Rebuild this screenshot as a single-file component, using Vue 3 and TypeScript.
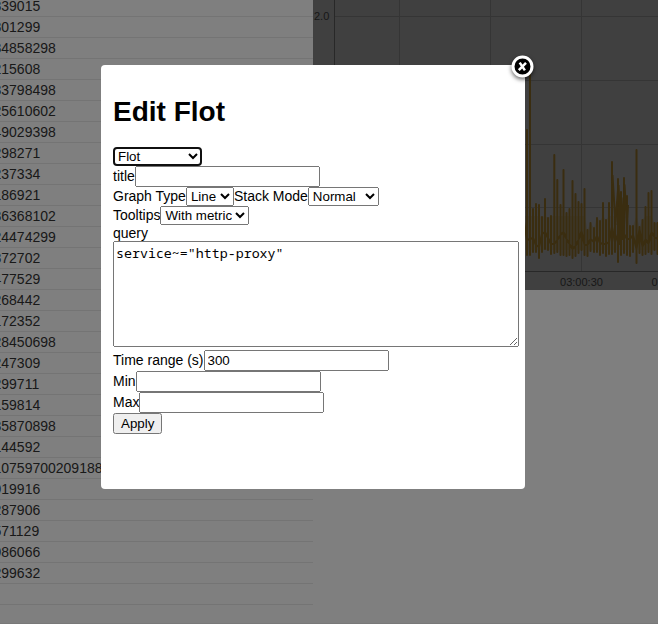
<script setup lang="ts">
import { onMounted, ref } from 'vue'

const rows: string[] = [
  '839015', '801299', '34858298', '215608', '33798498', '25610602', '49029398',
  '298271', '237334', '186921', '36368102', '24474299', '872702', '477529',
  '268442', '172352', '28450698', '247309', '299711', '159814', '35870898',
  '144592', '10759700209188', '919916', '287906', '571129', '986066', '299632', '', '',
]

const type = ref('Flot')
const title = ref('')
const graphType = ref('Line')
const stackMode = ref('Normal')
const tooltips = ref('With metric')
const query = ref('service~="http-proxy"')
const timeRange = ref('300')
const min = ref('')
const max = ref('')

const typeSelect = ref<HTMLSelectElement | null>(null)
onMounted(() => typeSelect.value?.focus())

// Each sample is [x, peak, middle, trough] in page pixels.
const samples: [number, number, number, number][] = [
  [524, 212, 222, 226], [527, 130, 240, 255], [530, 70, 239, 255], [533, 209, 238, 252],
  [536, 204, 245, 252], [539, 205, 247, 258], [542, 217, 234, 252], [545, 199, 232, 249],
  [548, 218, 238, 250], [551, 216, 244, 254], [554.3, 155, 244, 253], [557.3, 180, 240, 252],
  [560.5, 205, 235, 255], [563.5, 170, 232, 255], [566.5, 213, 239, 256], [569.5, 209, 244, 255],
  [572.5, 181, 249, 258], [575.5, 194, 246, 256], [578.5, 202, 240, 253], [581.5, 204, 231, 250],
  [584.5, 189, 245, 255], [587.5, 230, 245, 256], [590.5, 223, 239, 251], [594, 228, 242, 252],
  [597, 218, 236, 252], [600, 221, 243, 255], [603, 203, 244, 253], [606, 220, 244, 256],
  [609, 203, 242, 254], [612, 162, 227, 254], [615, 212, 242, 252], [618, 179, 234, 262],
  [621, 192, 235, 255], [624, 178, 234, 253], [627, 196, 239, 255], [630, 226, 239, 256],
  [633, 226, 235, 252], [636.5, 150, 249, 263], [639.5, 227, 229, 253], [642.5, 220, 247, 255],
  [645.5, 207, 239, 254], [648.5, 193, 244, 252], [651.5, 191, 232, 254], [654.5, 223, 237, 250],
  [657.5, 223, 239, 254],
]

const line: string = samples
  .map(([x, top, mid, bottom], i) => `${i === 0 ? 'M' : 'L'}${x - 313} ${mid}V${top}V${bottom}V${mid}`)
  .join('')
// Ramps that run slantwise between neighbouring samples.
const ramps = 'M299.5 175L302.5 225M302.5 222L305 190M305.5 185L307.5 230L308.5 198L310.5 228L311.5 185L314 225L315 205M306.5 200V245M309.5 205V240'
const area: string = `M211 230${samples
  .map(([x, top]) => `L${x - 313} ${Math.max(top, 216)}`)
  .join('')}L345 250L211 250Z`
</script>

<template>
  <div class="dashboard">
    <div class="values">
      <div v-for="(value, i) in rows" :key="i" class="value">{{ value }}</div>
    </div>
    <svg class="graph" width="345" height="290" viewBox="0 0 345 290">
      <rect width="345" height="290" fill="#808080" />
      <path class="grid" d="M21 16.5H345M21 80.5H345M21 144.5H345M21 207.5H345M86.5 0V271M177.5 0V271M268.5 0V271" />
      <path class="axis" d="M21.5 0V271M21 271.5H345" />
      <path :d="area" class="area" />
      <path :d="line" class="line" />
      <path :d="ramps" class="line" />
      <text x="1" y="20">2.0</text>
      <text x="268.5" y="286" text-anchor="middle">03:00:30</text>
      <text x="360" y="286" text-anchor="middle">03:01:00</text>
    </svg>
  </div>
  <div class="overlay">
    <form class="modal" @submit.prevent>
      <h1>Edit Flot</h1>
      <div><select ref="typeSelect" v-model="type" class="type"><option>Flot</option></select></div>
      <div><label>title</label><input v-model="title" type="text"></div>
      <div>
        <label>Graph Type</label><select v-model="graphType" class="graph-type"><option>Line</option></select><label>Stack Mode</label><select v-model="stackMode" class="stack"><option>Normal</option></select>
      </div>
      <div><label>Tooltips</label><select v-model="tooltips" class="tips"><option>With metric</option></select></div>
      <div><label>query</label></div>
      <div class="query"><textarea v-model="query" spellcheck="false"></textarea></div>
      <div><label>Time range (s)</label><input v-model="timeRange" type="text"></div>
      <div><label>Min</label><input v-model="min" type="text"></div>
      <div><label>Max</label><input v-model="max" type="text"></div>
      <div><button type="submit">Apply</button></div>
      <a class="close" aria-label="Close">
        <svg width="30" height="30" viewBox="0 0 30 30">
          <circle cx="15.5" cy="14.5" r="9.5" fill="#000" stroke="#fff" stroke-width="3" />
          <path d="M12.7 10.6L17.9 18.4M19 10.8L11.8 18.2" stroke="#fff" stroke-width="2.5" />
        </svg>
      </a>
    </form>
  </div>
</template>

<style>
body {
  margin: 0;
  overflow: hidden;
}
</style>

<style scoped>
.dashboard {
  box-sizing: border-box;
  display: flex;
  align-items: flex-start;
  width: 658px;
  height: 624px;
  overflow: hidden;
  background: #fff;
  border-bottom: 1px solid #f0f0f0;
  font: 14px "Liberation Sans", Arial, sans-serif;
}
.values {
  width: 313px;
  flex: none;
  margin-top: -4px;
  overflow: hidden;
}
.value {
  box-sizing: border-box;
  height: 21px;
  line-height: 20px;
  border-bottom: 1px solid #e8e8e8;
  text-indent: -6.5px;
  color: #333;
}
.graph {
  flex: none;
  display: block;
}
.graph text {
  font-size: 11px;
  fill: #303030;
}
.grid {
  stroke: #6a6a6a;
  fill: none;
}
.axis {
  stroke: #505050;
  fill: none;
}
.area {
  fill: #785a18;
  fill-opacity: 0.2;
}
.line {
  fill: none;
  stroke: #745a20;
  stroke-width: 2;
  stroke-linejoin: round;
}
.overlay {
  position: absolute;
  inset: 0;
  background: rgba(0, 0, 0, 0.5);
}
.modal {
  position: absolute;
  left: 101px;
  top: 65px;
  box-sizing: border-box;
  width: 424px;
  height: 424px;
  padding: 12px;
  border-radius: 4px;
  background: #fff;
  color: #000;
  font: 14px "Liberation Sans", Arial, sans-serif;
}
h1 {
  margin: 19px 0;
  font-size: 28px;
  line-height: 32px;
}
input,
select,
button {
  font-family: "Liberation Sans", Arial, sans-serif;
}
.type {
  width: 89px;
}
.stack {
  width: 71px;
}
textarea {
  box-sizing: border-box;
  width: 406px;
  height: 106px;
  padding-top: 2px;
  font-family: "Noto Sans Mono", "DejaVu Sans Mono", monospace;
  font-size: 13.3px;
  line-height: 18px;
}
.close {
  position: absolute;
  right: -12px;
  top: -13px;
  width: 30px;
  height: 30px;
}
.close svg {
  display: block;
  filter: drop-shadow(0 2px 2px rgba(0, 0, 0, 0.6));
}
</style>
